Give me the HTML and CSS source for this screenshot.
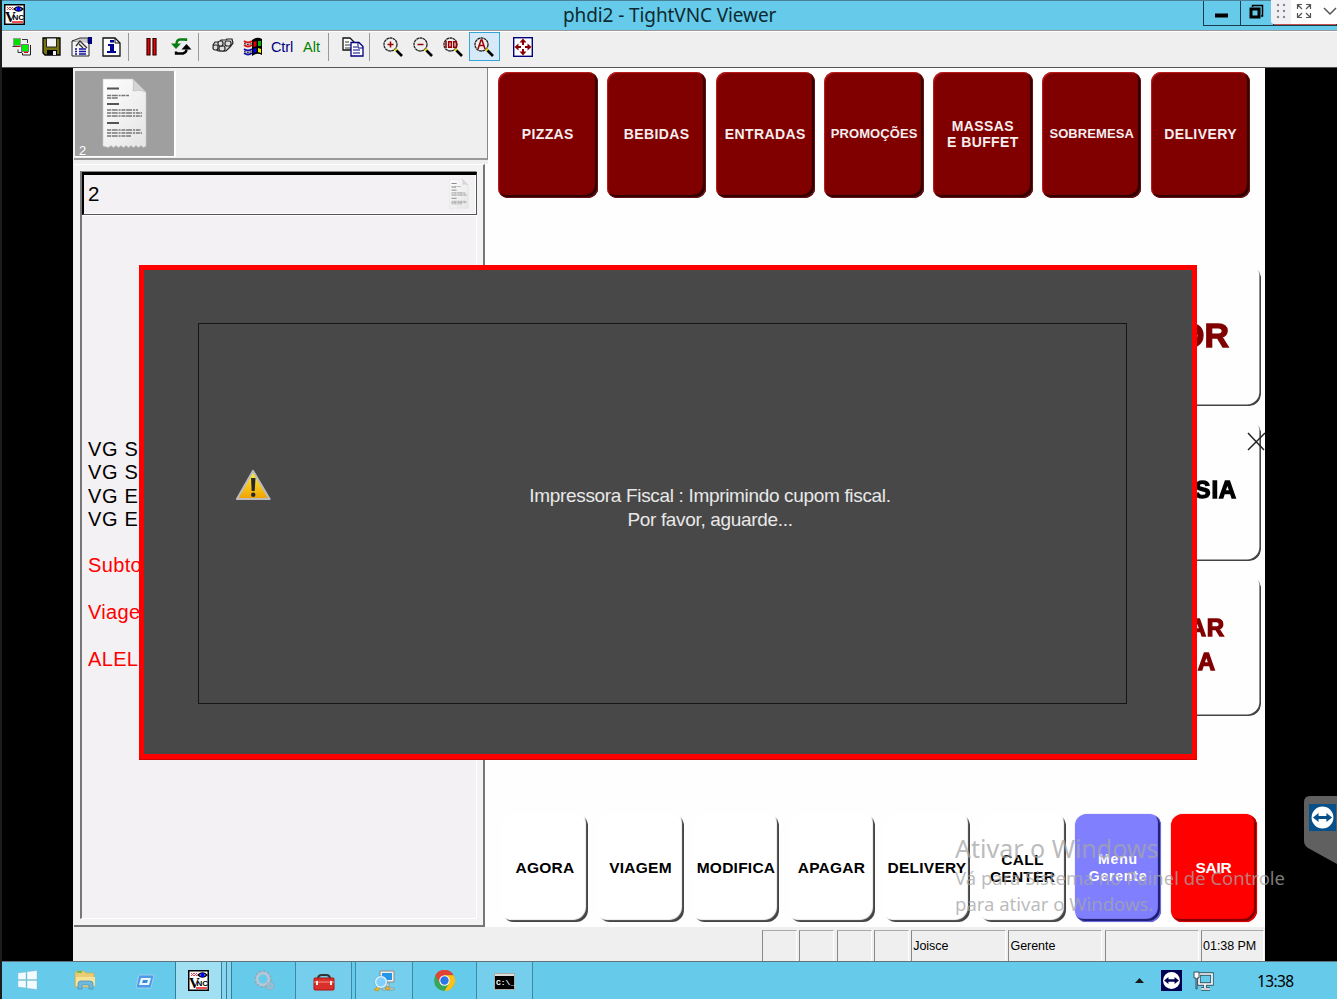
FILE: index.html
```html
<!DOCTYPE html>
<html lang="pt-BR">
<head>
<meta charset="utf-8">
<title>phdi2 - TightVNC Viewer</title>
<link rel="stylesheet" href="styles.css">
</head>
<body>
<svg width="0" height="0" class="defs">
  <defs>
    <linearGradient id="gold" x1="0" y1="0" x2="0" y2="1"><stop offset="0" stop-color="#fff23a"/><stop offset="1" stop-color="#f0a000"/></linearGradient>
    <linearGradient id="paper" x1="0" y1="0" x2="1" y2="1"><stop offset="0" stop-color="#fff"/><stop offset="1" stop-color="#e4e4e4"/></linearGradient>
    <symbol id="vnc" viewBox="0 0 21 21">
      <rect x=".75" y=".75" width="19.500" height="19.500" fill="#fff" stroke="#000" stroke-width="1.500"/>
      <path d="M3 3l3 3m0-3L3 6M6 3l3 3m0-3L6 6" stroke="#d44" fill="none"/>
      <path d="M10 5q4.500-4 9 0q-4.500 4-9 0z" fill="#fff" stroke="#000" stroke-width="1.300"/><circle cx="14.500" cy="5" r="2.200" fill="#00f"/>
      <text x="1" y="18" class="glyph-v">V</text><text x="8.500" y="16" class="glyph-nc">NC</text>
      <path d="M8 18h11" stroke="#e00" stroke-width="1.400"/>
    </symbol>
    <symbol id="lens" viewBox="0 0 20 20">
      <circle cx="7.500" cy="7.500" r="6.500" fill="#efefef" stroke="#222" stroke-width="1.300" stroke-dasharray="2.800 .4"/>
      <path d="M12 12l2 2" stroke="#e5d600" stroke-width="2.500"/><path d="M13.500 13.500l5.500 5.500" stroke="#000" stroke-width="2.600"/>
    </symbol>
    <symbol id="receipt" viewBox="0 0 45 70">
      <path d="M1 1H31L44 14V68l-2.5 1.5-2.5-2-2.5 2-2.5-2-2.5 2-2.5-2-2.5 2-2.5-2-2.5 2-2.5-2-2.5 2-2.5-2-2.5 2-2.5-2-2.5 2L1 68z" fill="url(#paper)" stroke="#c9c9c9" stroke-width=".6"/>
      <path d="M31 1q1 6 0 12q7-2 13 1z" fill="#d5d5d5" stroke="#aaa" stroke-width=".5"/>
      <path d="M5 10.500h12M5 26h12M5 45h12" stroke="#555" stroke-width="1.800"/>
      <g stroke="#777" stroke-width="1.500" fill="none" stroke-dasharray="4 .7 6 .9 2 .8">
        <path d="M5 17.500h22M5 20h11M5 32h31M5 35h35M5 38h35M5 52h34M5 55h35M5 58h24"/>
      </g>
    </symbol>
    <symbol id="viewer" viewBox="0 0 24 24">
      <rect width="24" height="24" fill="currentColor"/><circle cx="12" cy="12" r="9.700" class="disc"/>
      <path d="M3.500 12l5-4v2.600h7V8l5 4-5 4v-2.600h-7V16z" fill="currentColor"/>
    </symbol>
  </defs>
</svg>
<div class="screen">
  <header class="titlebar">
    <svg class="app-icon"><use href="#vnc"/></svg>
    <h1>phdi2 - TightVNC Viewer</h1>
    <div class="win-controls">
      <span class="win-btn"><svg width="36" height="25"><path d="M11 14.500h13" stroke="#000" stroke-width="4"/></svg></span>
      <span class="win-btn"><svg width="32" height="25"><path d="M11.500 6V4.500h10V15H20" fill="none" stroke="#000" stroke-width="1.500"/><rect x="10" y="8" width="8" height="8" fill="none" stroke="#000" stroke-width="3"/></svg></span>
      <span class="win-close"></span>
    </div>
    <div class="float-bar">
      <svg width="66" height="24"><path d="M0 0h20v24H4Q0 24 0 20z" fill="#f0f0f5"/>
        <g fill="#888"><circle cx="7" cy="5" r="1.200"/><circle cx="13" cy="5" r="1.200"/><circle cx="7" cy="11" r="1.200"/><circle cx="13" cy="11" r="1.200"/><circle cx="7" cy="17" r="1.200"/><circle cx="13" cy="17" r="1.200"/></g>
        <path d="M26.500 9V4.500H31M27 5l4 4M35 4.500h4.500V9M39 5l-4 4M26.500 13v4.500H31M27 17l4-4M35 17.500h4.500V13M39 17l-4-4" fill="none" stroke="#555" stroke-width="1.200"/>
        <path d="M53 8l6 6 6-6" fill="none" stroke="#555" stroke-width="1.500"/></svg>
    </div>
  </header>

  <nav class="toolbar">
    <svg class="t new" width="20" height="20"><rect x="1.500" y="1.500" width="7" height="7" fill="#00e000" stroke="#999"/><path d="M10 2.500h5.500V6M.5 9.500h8M6 12.500v3h4" stroke="#333" fill="none"/><rect x="9.500" y="7.500" width="7" height="7" fill="#00f000" stroke="#777"/><path d="M18.500 8v10h-8v-2" stroke="#222" fill="none"/><path d="M5 9.500h3M12 15.500h4" stroke="#d00"/></svg>
    <svg class="t save" width="20" height="20"><path d="M1 1h17v17H3l-2-2z" fill="#77730b" stroke="#000" stroke-width="1.300"/><path d="M4.500 1h10v9h-10z" fill="#f3f3f3" stroke="#222"/><path d="M5 13h10v5H5z" fill="#000"/><path d="M11 14h3v4h-3z" fill="#eee"/></svg>
    <svg class="t opts" width="21" height="20"><path d="M1 4h17v15H1z" fill="#f6f6f6" stroke="#222"/><path d="M1 4l8-3h8v5" fill="#ccc" stroke="#333"/><path d="M17 0h4v7h-4z" fill="#000080"/><path d="M5 9L9 4l7 7M8 7l4 4" fill="none" stroke="#333" stroke-width="1.300"/><path d="M4 12h2m2 0h7M4 14.500h2m2 0h7M4 17h2m2 0h7" stroke="#1111a0" stroke-width="1.300"/></svg>
    <svg class="t info" width="20" height="20"><path d="M1 1h12l5 5v13H1z" fill="#fff" stroke="#111" stroke-width="1.300"/><path d="M13 1v5h5" fill="none" stroke="#111"/><path d="M8 3h4v2.500H8zM6 7h6v7h2v2H5v-2h3V9H6z" fill="#000090"/></svg>
    <i class="sep"></i>
    <svg class="t pause" width="12" height="20"><path d="M1 1.500h3V18H1zM7 1.500h3V18H7z" fill="#e00" stroke="#300" stroke-width="1.200"/></svg>
    <svg class="t refresh" width="21" height="20"><path d="M15 4V2.500H9Q5.500 3 5.500 7" fill="none" stroke="#087d14" stroke-width="2.400"/><path d="M0 6.500h10L5 12z" fill="#087d14"/><path d="M5 14.500v2h7q3.500-1 3.500-4" fill="none" stroke="#000" stroke-width="2.400"/><path d="M10.500 12.500h10l-5-5.500z" fill="#000"/></svg>
    <i class="sep"></i>
    <svg class="t keys" width="22" height="20"><g fill="#ddd" stroke="#222" stroke-width="1.200"><path d="M1 8l2-3h5l1-2h5l1-1h5l1 4-3 4-4 4H6z"/><rect x="1" y="8" width="5" height="5" rx="2"/><rect x="7" y="9" width="6" height="5" rx="2"/><rect x="6" y="4" width="5" height="5" rx="2"/><rect x="13" y="4" width="6" height="5" rx="2"/></g></svg>
    <svg class="t winflag" width="22" height="20"><path d="M9 3q5-4 10-1v16q-5-3-10 1z" fill="#000"/><path d="M10.500 5l3-1v5l-3 1z" fill="#e00"/><path d="M15 4l3 0v5h-3z" fill="#0b0"/><path d="M10.500 12l3-1v4l-3 1z" fill="#00f"/><path d="M15 11l3 1v4l-3-1z" fill="#ee0"/><path d="M1 4q4 3 8 0M1 8q4 3 8 0" stroke="#d11" stroke-width="1.800" fill="none"/><path d="M1 12q4 3 8 0M1 16q4 3 8 0" stroke="#11a" stroke-width="1.800" fill="none"/><path d="M1 6q4 3 8 0M1 14q4 3 8 0" stroke="#000" fill="none" stroke-dasharray="2 1"/></svg>
    <span class="key ctrl">Ctrl</span><span class="key alt">Alt</span>
    <i class="sep"></i>
    <svg class="t copy" width="22" height="20"><path d="M1 1h7l4 4v8H1z" fill="#fff" stroke="#111" stroke-width="1.300"/><path d="M3 5h4M3 8h6M3 11h6" stroke="#333"/><path d="M9 5.500h8l4 4v9.500H9z" fill="#fff" stroke="#000080" stroke-width="1.300"/><path d="M16 6v5h5M11 10h4M11 13h7M11 16h7" stroke="#000080" fill="none"/></svg>
    <i class="sep"></i>
    <svg class="t z1" width="20" height="20"><use href="#lens"/><path d="M4.500 7.500h6M7.500 4.500v6" stroke="#900" stroke-width="1.500"/></svg>
    <svg class="t z2" width="20" height="20"><use href="#lens"/><path d="M4.500 7.500h6" stroke="#900" stroke-width="1.500"/></svg>
    <svg class="t z3" width="20" height="20"><use href="#lens"/><path d="M3 4v7" stroke="#900" stroke-width="1.600"/><path d="M5.700 4.700h2.600v5.600H5.700zM10.700 4.700h2.600v5.600h-2.600z" fill="none" stroke="#900" stroke-width="1.500"/></svg>
    <span class="pressed"><svg width="20" height="20"><use href="#lens"/><path d="M4 12l3-9h1l3 9M5 8.500h5" fill="none" stroke="#900" stroke-width="1.500"/></svg></span>
    <svg class="t full" width="20" height="20"><rect x=".7" y=".7" width="18.600" height="18.600" fill="#fff" stroke="#000080" stroke-width="1.400"/><path d="M10 1.500L13.500 5.500h-7zM10 18.500L13.500 14.500h-7zM1.500 10L5.500 6.500v7zM18.500 10L14.500 6.500v7z" fill="#800"/><path d="M10 4v4m0 4v4M4 10h4m4 0h4" stroke="#800" stroke-width="2"/></svg>
  </nav>

  <main class="session">
    <div class="pos">
      <section class="checks">
        <div class="tabs"><div class="tab"><svg width="45" height="70"><use href="#receipt"/></svg><span>2</span></div></div>
        <div class="order">
          <div class="sheet">
            <div class="number"><span>2</span><svg width="20" height="30"><use href="#receipt" opacity=".85"/></svg></div>
            <div class="lines">
              <p>VG S</p><p>VG S</p><p>VG E</p><p>VG E</p>
              <p class="due">Subto</p><p class="due">Viagem</p><p class="due">ALEL</p>
            </div>
          </div>
        </div>
      </section>
      <section class="keys-area">
        <div class="cats">
          <button>PIZZAS</button><button>BEBIDAS</button><button>ENTRADAS</button><button class="narrow">PROMOÇÕES</button><button>MASSAS<br>E BUFFET</button><button class="narrow">SOBREMESA</button><button>DELIVERY</button>
        </div>
        <div class="cards">
          <button class="big"><span>OR</span></button>
          <button class="mid"><span>SIA</span></button>
          <button class="low"><span>AR</span><span class="second">A</span></button>
        </div>
        <div class="actions">
          <button>AGORA</button><button>VIAGEM</button><button>MODIFICA</button><button>APAGAR</button><button>DELIVERY</button><button>CALL<br>CENTER</button><button class="manager">Menu<br>Gerente</button><button class="exit">SAIR</button>
        </div>
      </section>
      <footer class="status"><span></span><span></span><span></span><span></span><span>Joisce</span><span>Gerente</span><span></span><span>01:38 PM</span></footer>
    </div>
  </main>

  <div class="taskbar">
    <div class="task start"><svg width="20" height="20"><path d="M0 3l8-1v7.500H0zM9 1.800L19 .5v9H9zM0 10.500h8V18l-8-1zM9 10.500h10v9L9 18.200z" fill="#f2fbff" stroke="#7aa" stroke-width=".3"/></svg></div>
    <div class="task"><svg width="22" height="20"><path d="M1 3l2-2h7l2 2h8v14H1z" fill="#e8cd72" stroke="#c9a94a" stroke-width=".6"/><path d="M2 7h19v9H2z" fill="#f7e29a"/><path d="M3 2h5" stroke="#5ab54a" stroke-width="1.500"/><path d="M4 19v-5q0-3 3-3h9q3 0 3 3v5h-4v-4H8v4z" fill="#6fb9dd" stroke="#3c8fbd" stroke-width=".7"/></svg></div>
    <div class="task ps"><svg width="20" height="16"><path d="M4 1h15l-3 13H1z" fill="#4d9be8" stroke="#9bd1f7"/><path d="M6 4h10l-2 7H4z" fill="#eaf6ff"/><path d="M8 6h5l-1 3H7z" fill="#3b8bdc"/></svg></div>
    <div class="task active"><svg width="21" height="21"><use href="#vnc"/></svg></div>
    <div class="stack-edge"></div>
    <div class="task lit wide"><svg width="21" height="21"><circle cx="9" cy="9" r="6" fill="none" stroke="#b7c7d5" stroke-width="3"/><circle cx="9" cy="9" r="8" fill="none" stroke="#93a9ba" stroke-width="2" stroke-dasharray="2 2.200"/><circle cx="16" cy="16" r="2.500" fill="none" stroke="#a7b8c8" stroke-width="2"/><circle cx="16" cy="16" r="4" fill="none" stroke="#8ea8bb" stroke-dasharray="1.500 1.500"/></svg></div>
    <div class="task lit toolbox"><svg width="22" height="17"><path d="M5 5q0-4 4-4h4q4 0 4 4" fill="none" stroke="#333" stroke-width="2"/><rect x="1" y="4" width="20" height="12" rx="1" fill="#d9302b" stroke="#a91512"/><path d="M1 8h20" stroke="#ee7068" stroke-width="1.500"/><path d="M4 7v4M18 7v4" stroke="#eee" stroke-width="2"/></svg></div>
    <div class="stack-edge small"></div>
    <div class="task lit search"><svg width="23" height="22"><path d="M7 1h14v11H7z" fill="#f4f0ea" stroke="#8a8a8a"/><path d="M9 3h10v7H9z" fill="#2696e8"/><path d="M13 13h3v4h-3zM9 18h12v2H9z" fill="#ccd4d8" stroke="#788" stroke-width=".6"/><path d="M1 20l4-4 2 2-2 3zM12 19l3-3 2 4z" fill="#eeb521" stroke="#b98200" stroke-width=".5"/><circle cx="8" cy="12" r="5.500" fill="#7fd0ff" stroke="#e8f7ff" stroke-width="1.500"/><circle cx="8" cy="12" r="6.300" fill="none" stroke="#4a9bc4" stroke-width=".5"/></svg></div>
    <div class="task chrome"><svg width="21" height="21" viewBox="0 0 20 20"><circle cx="10" cy="10" r="10" fill="#3aa757"/><path d="M1.300 5A10 10 0 0 1 18.700 5H10v5z" fill="#e34133"/><path d="M18.700 5A10 10 0 0 1 10 20l4.300-7.500L10 5z" fill="#fbc116"/><path d="M1.300 5l4.400 7.500L10 10V5z" fill="#e34133"/><circle cx="10" cy="10" r="5" fill="#fff"/><circle cx="10" cy="10" r="4" fill="#2b76e5"/></svg></div>
    <div class="task lit cmd"><svg width="21" height="17"><rect x=".5" y=".5" width="20" height="16" fill="#000" stroke="#aaa"/><path d="M1 2h19" stroke="#ddd" stroke-width="2"/><text x="2" y="12" class="glyph-cmd">C:\_</text></svg></div>
    <div class="tray">
      <svg width="9" height="5"><path d="M0 5l4.500-5L9 5z" fill="#191919"/></svg>
      <svg width="21" height="21" class="tv-dark"><use href="#viewer"/></svg>
      <svg width="22" height="20"><path d="M7 3h13v10H7zM13 13v4M9 18h9" fill="none" stroke="#35505d" stroke-width="3.400"/><path d="M7 3h13v10H7zM13 13v4M9 18h9" fill="none" stroke="#fff" stroke-width="1.700"/><path d="M2 1h5v6H5v11H4V7H2z" fill="#fff" stroke="#35505d"/></svg>
      <time>13:38</time>
    </div>
  </div>

  <div class="dialog">
    <div class="frame">
      <svg class="warning" width="36" height="32"><path d="M17 2L33.500 30H1z" fill="url(#gold)" stroke="#bcbcbc" stroke-width="2.200" stroke-linejoin="round"/><path d="M15 9h4.500l-.8 13h-3z" fill="#24282d"/><circle cx="17.200" cy="25.800" r="2.200" fill="#24282d"/></svg>
      <p>Impressora Fiscal : Imprimindo cupom fiscal.<br>Por favor, aguarde...</p>
    </div>
  </div>
  <svg class="cursor" width="18" height="19"><path d="M1 1l16 17M1 18L18 1" stroke="#222" stroke-width="1.500"/></svg>
  <div class="watermark"><h2>Ativar o Windows</h2><p>Vá para Sistema no Painel de Controle<br>para ativar o Windows.</p></div>
  <div class="side-tab"><svg width="33" height="68"><path d="M0 6Q0 0 6 0H33V68L4 52Q0 49 0 45z" fill="#606060"/><svg x="5" y="8" width="27" height="27" class="tv-blue"><use href="#viewer"/></svg></svg></div>
</div>
</body>
</html>
```

FILE: styles.css
```css
* { box-sizing: border-box; }
body { margin: 0; background: #000; font-family: "Liberation Sans", Arial, sans-serif; }
h1, h2, p { margin: 0; font-weight: normal; }
svg { display: block; flex: none; }
.defs { position: absolute; }
.screen { position: relative; width: 1337px; height: 999px; display: flex; flex-direction: column; border-left: 2px solid #1c1c1c; overflow: hidden; }
.glyph-v { font: bold 15px "Liberation Serif", serif; }
.glyph-nc { font: bold 8px "Liberation Sans", sans-serif; }
.glyph-cmd { font: bold 8px "Liberation Mono", monospace; fill: #fff; }

.titlebar { flex: none; height: 31px; background: #66caea; border-top: 1px solid #4b8299; border-bottom: 1px solid #999; display: flex; align-items: flex-start; }
.app-icon { width: 21px; height: 21px; margin: 3px 0 0 2px; }
.titlebar h1 { width: 1178px; padding-left: 538px; font: 19px/28px "Noto Sans", sans-serif; letter-spacing: -.1px; color: #0c2a31; white-space: nowrap; }
.win-controls { display: flex; height: 25px; border: 1px solid #183c49; border-top: 0; flex: none; }
.win-btn { border-right: 1px solid #183c49; }
.win-close { width: 62px; background: #c75050; }
.float-bar { position: absolute; left: 1269px; top: 0; width: 66px; height: 24px; background: #fff; border-radius: 0 0 0 4px; }

.toolbar { flex: none; height: 37px; display: flex; align-items: flex-start; padding: 5px 0 0 10px; background: #efefef; border-top: 1px solid #fff; border-bottom: 1px solid #555; }
.toolbar .sep { width: 1px; height: 28px; background: #999; margin-top: -4px; }
.toolbar > * { flex: none; }
.save { margin-left: 10px; } .opts { margin-left: 9px; } .info { margin-left: 10px; }
.info + .sep { margin-left: 6px; }
.pause { margin-left: 17px; } .refresh { margin-left: 13px; }
.refresh + .sep { margin-left: 6px; }
.keys { margin-left: 13px; } .winflag { margin-left: 9px; }
.key { font-size: 14.500px; line-height: 20px; margin-left: 6px; }
.ctrl { color: #000080; width: 24px; letter-spacing: -.1px; } .alt { color: #008000; width: 20px; margin-left: 8px; letter-spacing: 0; }
.alt + .sep { margin-left: 5px; }
.copy { margin-left: 13px; } .copy + .sep { margin-left: 5px; }
.z1 { margin-left: 13px; } .z2, .z3 { margin-left: 10px; }
.pressed { width: 31px; height: 29px; margin: -5px 0 0 6px; padding: 4px 0 0 4px; border: 1px solid #35a4d8; background: #d6e9f8; }
.full { margin-left: 13px; }

.session { flex: none; height: 893px; padding-left: 71px; background: #000; }
.pos { width: 1192px; height: 893px; display: grid; grid-template-columns: 416px 776px; grid-template-rows: 859px 34px; background: #fefefe; }
.checks { border-left: 1px solid #eee; background: #efefef; display: flex; flex-direction: column; width: 415px; }
.tabs { height: 92px; border-right: 1px solid #888; border-bottom: 2px solid #999; padding: 3px 0 0 1px; }
.tab { width: 101px; height: 86px; background: #9f9f9f; border-right: 2px solid #fff; border-bottom: 1px solid #fff; display: flex; padding: 7px 0 0 27px; position: relative; }
.tab span { position: absolute; left: 4px; bottom: -2px; color: #fff; font-size: 13px; }
.order { flex: 1; margin-top: 4px; width: 411px; padding: 6px; border-right: 2px solid #777; border-bottom: 2px solid #777; border-top: 1px solid #fff; background: #f3f3f3; box-shadow: 3px 0 #fefefe; }
.sheet { height: 100%; background: #f3f1f3; border-left: 2px solid #777; border-top: 1px solid #888; border-right: 1px solid #fff; border-bottom: 1px solid #fff; }
.number { height: 43px; width: 395px; border: 1px solid #555; border-top: 3px solid #000; border-left: 2px solid #000; box-shadow: inset -1px -1px #fff, 0 1px #fff; display: flex; justify-content: space-between; align-items: center; padding: 0 7px 2px 4px; font-size: 20.500px; }
.lines { padding: 223px 0 0 6px; font-size: 20px; line-height: 23.300px; letter-spacing: .65px; white-space: nowrap; }
.due { color: #f00; margin-top: 23.300px; letter-spacing: .35px; }

.keys-area { display: flex; flex-direction: column; padding-left: 8px; }
button { margin: 0; padding: 0; border: 0; font: bold 14px/16px "Liberation Sans", sans-serif; letter-spacing: .4px; }
.cats { margin: 4px 0 0 1px; display: grid; grid-template-columns: repeat(7, 99.500px); gap: 9.300px; height: 126px; }
.cats button { white-space: nowrap; display: flex; align-items: center; justify-content: center; padding-bottom: 3px; border-radius: 10px; background: #800000; color: #f6eeee; box-shadow: inset 1px 1px 1px #c02020, inset -1px -1px 1px #701010, inset -3px -3px 1px #2b0000; }
.cats .narrow { font-size: 13px; letter-spacing: .1px; }
.cards { margin-top: 68px; align-self: flex-end; margin-right: 4px; display: grid; grid-template-rows: repeat(3, 140px); gap: 15px; }
.cards button { width: 190px; text-align: right; background: none; color: #800000; border-radius: 12px; box-shadow: inset -2px -2px 0 -0.400px #444; display: flex; flex-direction: column; align-items: flex-end; justify-content: center; padding-bottom: 3px; -webkit-text-stroke: 1.300px; mask-image: linear-gradient(to bottom, transparent 0, #000 10px); }
.cards .big { font-size: 34px; line-height: 38px; padding-right: 32px; letter-spacing: 0; }
.cards .mid { font-size: 24px; line-height: 28px; padding-right: 24px; color: #000; letter-spacing: .8px; }
.cards .low { font-size: 24px; line-height: 34px; padding-right: 36px; letter-spacing: .8px; }
.second { padding-right: 9px; }
.actions { margin: 98px 0 0 5px; display: grid; grid-template-columns: repeat(8, 86px); gap: 9.500px; height: 108px; }
.actions button { display: flex; align-items: center; justify-content: center; text-align: center; background: #fff; border-radius: 12px; box-shadow: inset -3px -3px 1px -1px #444; font-size: 15.500px; line-height: 17px; letter-spacing: .25px; white-space: nowrap; padding-bottom: 1px; }
.actions .manager { background: #8080ff; color: #fff; font-size: 14px; letter-spacing: .8px; box-shadow: inset -1px -1px 1px #77e, inset -3px -3px 1px #18186c, 0 0 1px #88f; }
.actions .exit { background: #f00; color: #fff; letter-spacing: -.2px; box-shadow: inset -1px -1px 1px #e00, inset -3px -3px 1px #7c0000, 0 0 1px #f00; }

.status { grid-column: 1 / -1; background: #efefef; padding: 3px 1px 2px 689px; display: grid; grid-template-columns: 35px 35px 35px 35px 95px 94px 94px 63px; gap: 2.300px; font: 12.500px/30px "Liberation Sans", sans-serif; letter-spacing: -.05px; }
.status span { border-left: 1px solid #888; border-top: 1px solid #aaa; border-right: 1px solid #fff; padding-left: 1px; white-space: nowrap; }

.taskbar { flex: none; height: 38px; background: #66caea; border-top: 1px solid #60737b; display: flex; }
.task { width: 58px; display: flex; justify-content: center; padding-top: 8px; flex: none; }
.start { width: 52px; }
.start + .task { width: 61px; }
.ps { width: 60px; padding-top: 12px; }
.active { width: 47px; background: #a1dff3; border-left: 1px solid #387e97; border-right: 1px solid #387e97; }
.stack-edge { width: 10px; margin-right: 1px; background: linear-gradient(to right, #88d5ef 4px, #387e97 4px 5px, #88d5ef 5px 9px, #387e97 9px); flex: none; }
.lit { background: #75cfec; border-right: 1px solid #3c8ba5; }
.wide { width: 63px; background: #66caea; }
.toolbox { width: 56px; padding-top: 12px; }
.stack-edge.small { width: 4px; margin: 0; background: #66caea; border-right: 1px solid #3c8ba5; }
.search { width: 57px; } .chrome { width: 63px; }
.cmd { width: 57px; border-left: 1px solid #3c8ba5; padding-top: 11px; }
.tray { margin-left: auto; display: flex; align-items: center; padding-right: 42px; }
.tray svg { margin-right: 10px; }
.tray svg:first-child { margin-right: 17px; }
.tray time { margin-left: 33px; font: 15.500px "Noto Sans", sans-serif; letter-spacing: -.6px; width: 38px; white-space: nowrap; }
.tv-dark { color: #000050; } .tv-blue { color: #07508a; }
.disc { fill: #fff; } .tv-blue .disc { fill: #777; }

.dialog { position: absolute; left: 137px; top: 265px; width: 1058px; height: 494px; border: 5px solid #f00; background: #484848; padding: 53px 65px 50px 54px; box-shadow: 0 1px #c00; }
.frame { height: 100%; border: 1px solid #151515; display: flex; padding: 145px 0 0 37px; color: #e8e8e8; }
.frame p { flex: none; width: 874px; margin: 15px 0 0 1px; text-align: center; font: 19px/24px "Liberation Sans", sans-serif; letter-spacing: -.33px; white-space: nowrap; }
.cursor { position: absolute; left: 1245px; top: 432px; }
.watermark { position: absolute; left: 953px; top: 831px; color: rgba(165,165,165,.75); font: 18.500px/26px "Noto Sans", sans-serif; white-space: nowrap; }
.watermark h2 { font-size: 25px; line-height: 34px; }
.side-tab { position: absolute; left: 1302px; top: 796px; }
```
